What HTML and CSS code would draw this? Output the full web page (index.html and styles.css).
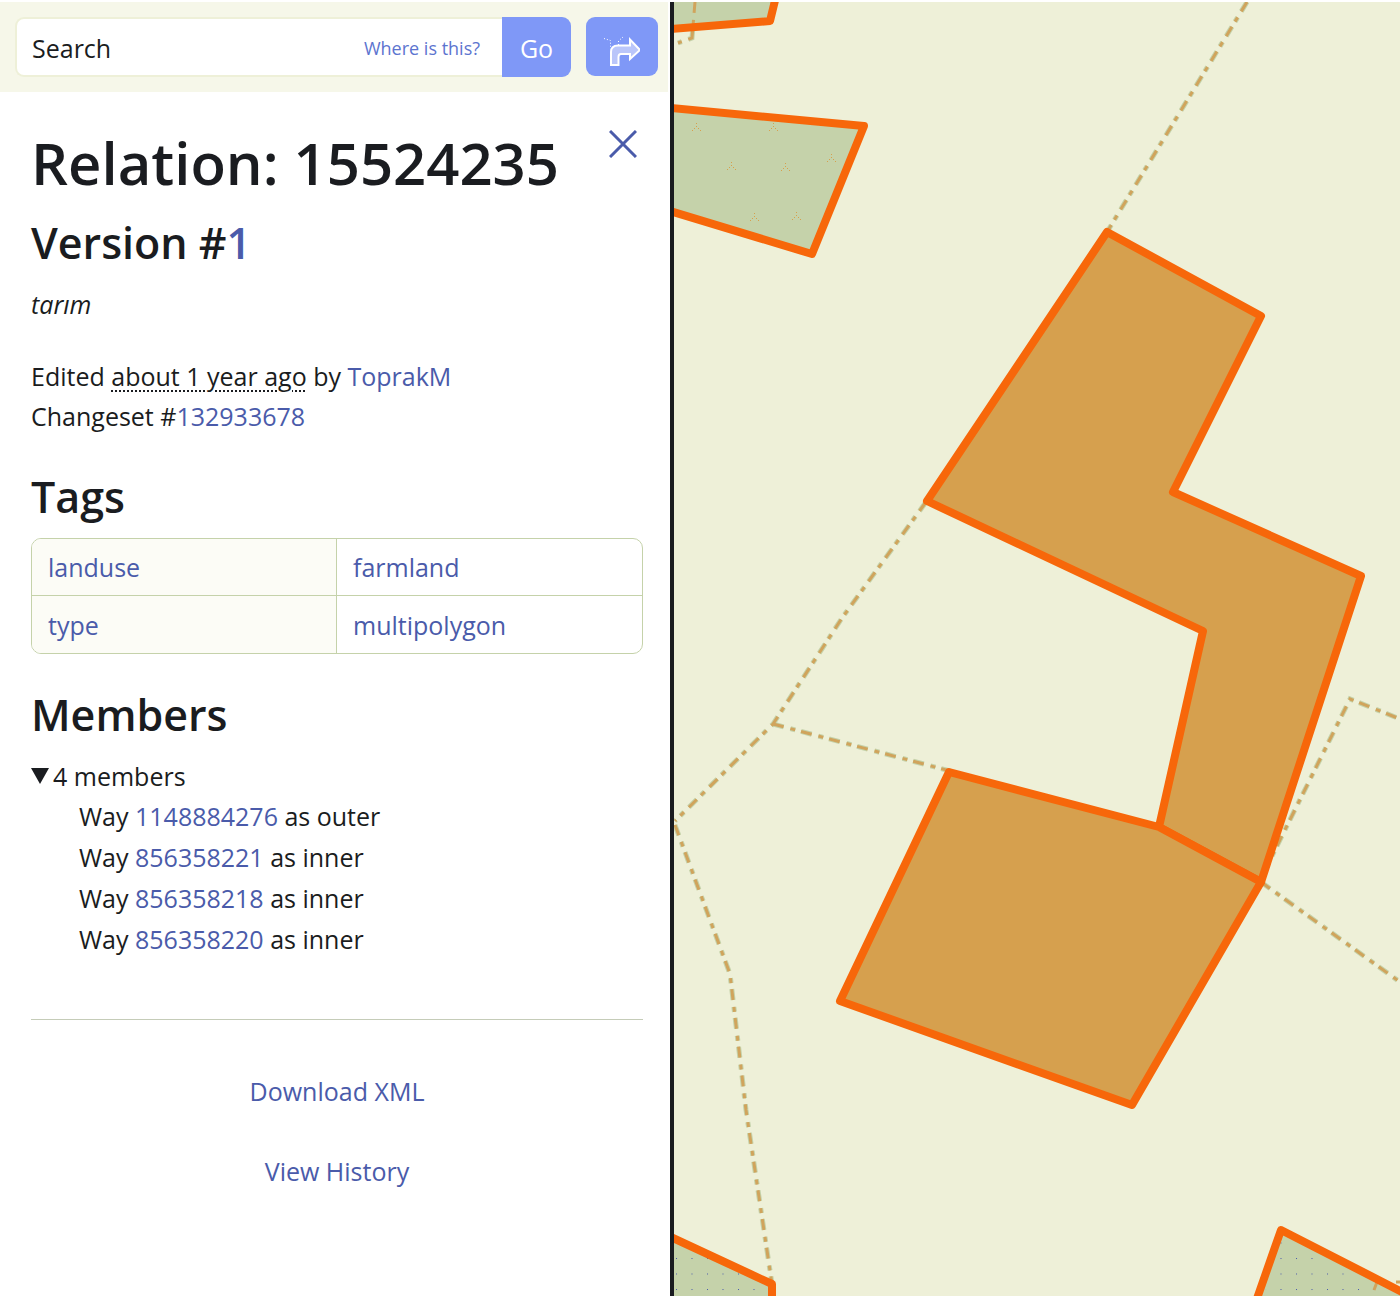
FILE: index.html
```html
<!DOCTYPE html>
<html lang="en">
<head>
<meta charset="utf-8">
<title>Relation: 15524235</title>
<link rel="stylesheet" href="styles.css">
</head>
<body>
<main class="layout">
  <aside class="sidebar">
    <div class="search-bar">
      <form class="search-group">
        <input class="search-input" type="text" placeholder="Search" aria-label="Search">
        <a class="where-link" href="#">Where is this?</a>
        <button class="button go-button" type="submit">Go</button>
      </form>
      <button class="button directions-button" type="button" aria-label="Find directions">
        <svg width="36" height="42" viewBox="0 -8 36 42" fill="none" stroke="#fff">
          <path d="M0 4.500L6.500 6.500V13M19 3L14.500 7V11" stroke-dasharray="1 2"/>
          <path d="M7 31V18Q7 11.500 14 11.500H26V5.500L36 16L26 25V20H17Q14.500 20 14.500 23V31Z" fill="#bac6fa" stroke-width="2"/>
        </svg>
      </button>
    </div>
    <div class="content">
      <div class="title-row">
        <h1>Relation: 15524235</h1>
        <button class="close-button" type="button" aria-label="Close">
          <svg width="28" height="28" viewBox="0 0 28 28"><path d="M1 1L27 27M27 1L1 27" stroke="#4a5baa" stroke-width="3"/></svg>
        </button>
      </div>
      <h2 class="version">Version #<a href="#">1</a></h2>
      <p class="comment"><em>tarım</em></p>
      <div class="details">
        <div>Edited <abbr title="about 1 year ago">about 1 year ago</abbr> by <a href="#">ToprakM</a></div>
        <div>Changeset #<a href="#">132933678</a></div>
      </div>
      <h2>Tags</h2>
      <table class="tags">
        <tr><th scope="row"><a href="#">landuse</a></th><td><a href="#">farmland</a></td></tr>
        <tr><th scope="row"><a href="#">type</a></th><td><a href="#">multipolygon</a></td></tr>
      </table>
      <h2>Members</h2>
      <details class="members" open>
        <summary><svg width="18" height="16" viewBox="0 0 18 16"><path d="M0 0H18L9 16Z" fill="#1a1c20"/></svg>4 members</summary>
        <ul>
          <li>Way <a href="#">1148884276</a> as outer</li>
          <li>Way <a href="#">856358221</a> as inner</li>
          <li>Way <a href="#">856358218</a> as inner</li>
          <li>Way <a href="#">856358220</a> as inner</li>
        </ul>
      </details>
      <nav class="actions">
        <a href="#">Download XML</a>
        <a href="#">View History</a>
      </nav>
    </div>
  </aside>
  <section class="map" aria-label="Map">
    <svg class="map-canvas" viewBox="674 2 726 1294" preserveAspectRatio="xMinYMin slice">
      <defs>
        <pattern id="dots" x="676" y="1258" width="15.500" height="15.500" patternUnits="userSpaceOnUse"><rect width="1" height="1" fill="#4a5baa"/></pattern>
        <g id="sprout" fill="#d6a04e"><path d="M-4 4h1v1h-1zM4 4h1v1h-1zM0 0h1v1h-1zM-2 2h1v1h-1zM2 2h1v1h-1zM0-3h1v1h-1z"/></g>
      </defs>
      <g fill="#c5d2aa">
        <path d="M660 -20H780L770 21L660 30Z"/>
        <path d="M660 107L864 126L812 254L660 208Z"/>
        <path d="M660 1232L772 1284V1310H660Z"/>
        <path d="M1253 1310L1281 1230L1410 1296V1310Z"/>
      </g>
      <g fill="url(#dots)">
        <path d="M660 1236L772 1288V1310H660Z"/>
        <path d="M1260 1310L1281 1238L1400 1298V1310Z"/>
      </g>
      <use href="#sprout" x="696" y="126"/><use href="#sprout" x="773" y="126"/><use href="#sprout" x="831" y="157"/>
      <use href="#sprout" x="731" y="165"/><use href="#sprout" x="785" y="166"/><use href="#sprout" x="754" y="216"/><use href="#sprout" x="796" y="215"/>
      <g class="boundary-halo">
        <path d="M1247 2L1107 232"/><path d="M926 502L842 618L773 724L675 821"/>
        <path d="M773 724L950 771"/><path d="M675 825L730 974L746 1110L772 1284"/>
        <path d="M1264 872L1350 699L1400 719"/><path d="M1261 882L1400 982"/><path d="M695 2L692 38L678 43"/>
      </g>
      <g class="boundary">
        <path d="M1247 2L1107 232"/><path d="M926 502L842 618L773 724L675 821"/>
        <path d="M773 724L950 771"/><path d="M675 825L730 974L746 1110L772 1284"/>
        <path d="M1264 872L1350 699L1400 719"/><path d="M1261 882L1400 982"/><path d="M695 2L692 38L678 43"/>
        <path d="M1374 1290L1377 1282M1396 1282H1400"/>
      </g>
      <path class="parcel" fill="#d6a04e" d="M1107 232L1261 316L1173 492L1361 576L1261 882L1159 827L1203 631L927 501Z"/>
      <path class="parcel" fill="#d6a04e" d="M949 772L1159 827L1261 882L1132 1105L840 1001Z"/>
      <g class="parcel" fill="none">
        <path d="M660 30L770 21L780 -20"/>
        <path d="M660 107L864 126L812 254L660 208"/>
        <path d="M660 1232L772 1284V1310"/>
        <path d="M1253 1310L1281 1230L1410 1296"/>
      </g>
    </svg>
  </section>
</main>
</body>
</html>
```
FILE: styles.css
```css
* { box-sizing: border-box; }

body {
  margin: 0;
  padding-top: 2px;
  background: #fff;
  color: #1a1c20;
  font: 25px/40px "Open Sans", "Noto Sans", sans-serif;
}

a { color: #4a5baa; text-decoration: none; }

.layout {
  display: grid;
  grid-template-columns: 674px 1fr;
  min-height: calc(100vh - 2px);
}

.sidebar { border-right: 4px solid #1a1c20; }

.search-bar {
  display: flex;
  gap: 15px;
  margin-right: 2px;
  padding: 15px 10px 15px 15px;
  background: #f6f7e9;
}

.search-group {
  display: flex;
  flex: 1;
  align-items: center;
  height: 60px;
  border: 2px solid #eef0d8;
  border-right: 0;
  border-radius: 9px;
  background: #fff;
}

.search-input {
  flex: 1;
  min-width: 0;
  padding: 2px 0 0 15px;
  border: 0;
  outline: 0;
  background: transparent;
  color: inherit;
  font: inherit;
}

.search-input::placeholder { color: #1a1c20; opacity: 1; }

.where-link { margin-right: 22px; padding-top: 2px; color: #5c74cf; font-size: 18px; }

.button {
  padding: 0;
  border: 0;
  border-radius: 9px;
  background: #7f98f7;
  color: #fff;
  font: inherit;
}

.go-button { width: 69px; height: 60px; padding-top: 2px; border-radius: 0 9px 9px 0; }

.directions-button {
  display: flex;
  align-items: center;
  justify-content: center;
  width: 72px;
  height: 59px;
}

.content { padding: 32px 27px 32px 31px; }

.title-row { display: flex; align-items: flex-start; justify-content: space-between; }

h1, h2 { margin: 0; font-weight: 600; }
h1 { font-size: 58px; line-height: 78px; }
h2 { margin-bottom: 12px; font-size: 43px; line-height: 58px; }

.close-button { padding: 6px; border: 0; background: none; line-height: 0; }

.version { margin: 12px 0; }

.comment { margin: 0 0 32px; }

.details { margin-bottom: 32px; }

abbr { text-decoration: underline dotted 2px; text-underline-offset: 4px; }

.tags {
  width: 100%;
  margin-bottom: 32px;
  border: 1px solid #c5d2aa;
  border-radius: 10px;
  border-spacing: 0;
  table-layout: fixed;
}

.tags th, .tags td { height: 57px; padding: 8px 16px; font-weight: 400; text-align: left; }
.tags th { border-right: 1px solid #c5d2aa; background: #fcfcf6; }
.tags tr:first-child > * { border-bottom: 1px solid #c5d2aa; }
.tags tr:first-child th { border-top-left-radius: 9px; }
.tags tr:last-child th { border-bottom-left-radius: 9px; }

.members summary { display: flex; align-items: center; gap: 4px; }
.members ul { margin: 0; padding: 0 0 0 48px; line-height: 41px; list-style: none; }

.actions {
  display: flex;
  flex-direction: column;
  align-items: center;
  gap: 40px;
  margin-top: 59px;
  padding-top: 51px;
  border-top: 1px solid #c5ccb8;
}

.map { position: relative; overflow: hidden; background: #eef0d8; }
.map-canvas { position: absolute; inset: 0; width: 100%; height: 100%; }

.parcel { stroke: #f7670a; stroke-width: 8px; stroke-linejoin: round; }

.boundary, .boundary-halo { fill: none; stroke: #d0a45c; stroke-width: 3px; stroke-dasharray: 11 7 5 6; }
.boundary-halo { stroke: #c5d2aa; stroke-width: 5px; }
```
